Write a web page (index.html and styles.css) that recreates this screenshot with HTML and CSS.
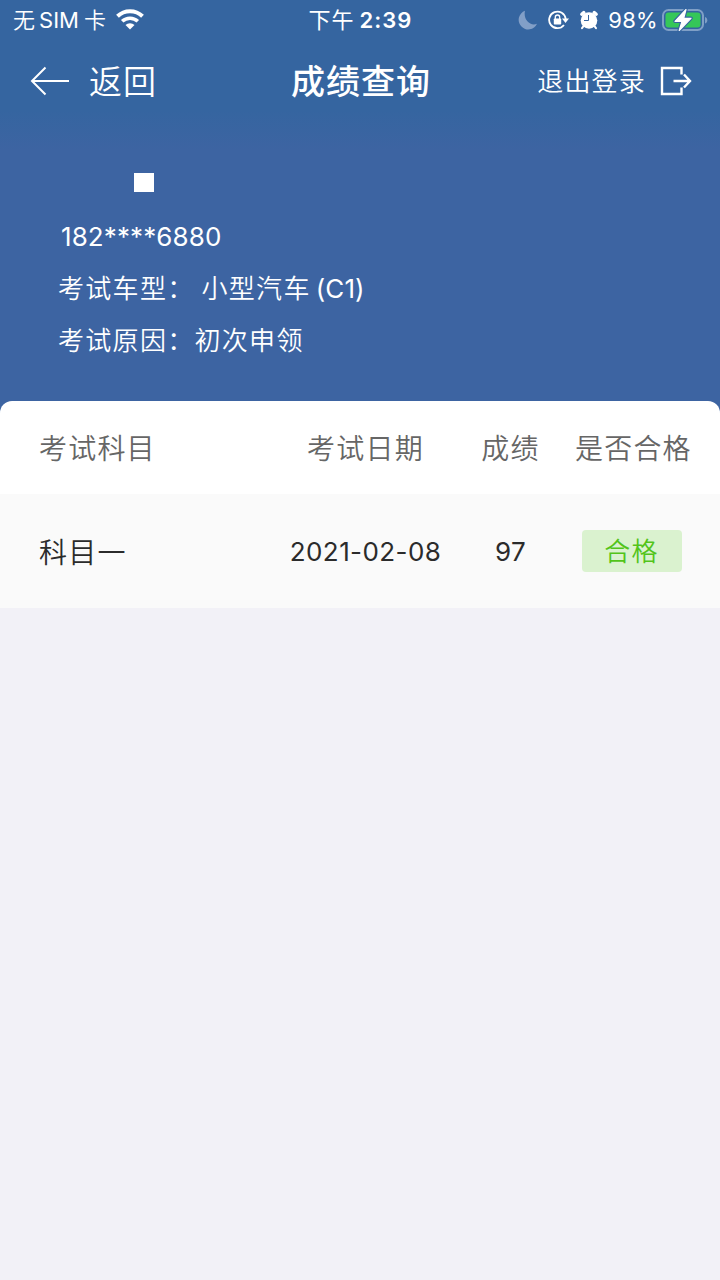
FILE: index.html
```
<!DOCTYPE html>
<html lang="zh-CN">
<head>
    <meta charset="UTF-8">
    <meta name="viewport" content="width=device-width, initial-scale=1.0">
    <title>成绩查询</title>
    <link rel="stylesheet" href="styles.css">
</head>
<body>
    <header class="header">
        <div class="status-bar">
            <div class="status-left">
                <span class="carrier">无<span class="sim">SIM</span>卡</span>
                <svg class="wifi" width="28" height="21" viewBox="0 0 28 21" fill="none">
                    <path d="M1.5 7.2a18 18 0 0 1 25 0" stroke="#fff" stroke-width="4"/>
                    <path d="M6.2 12.3a11.3 11.3 0 0 1 15.6 0" stroke="#fff" stroke-width="3.6"/>
                    <path d="M9.5 16a6.5 6.5 0 0 1 9 0L14 20.6z" fill="#fff"/>
                </svg>
            </div>
            <div class="status-time">下午<span class="clock">2:39</span></div>
            <div class="status-right">
                <svg class="moon" width="20" height="20" viewBox="0 0 20 20">
                    <path d="M7 .8A9.6 9.6 0 1 0 19 13.8C12 16.5 5 9.5 7 .8z" fill="#829fc7"/>
                </svg>
                <svg class="lock" width="21" height="20" viewBox="0 0 21 20" fill="none">
                    <path d="M17.7 9A8.3 8.3 0 1 0 16 15" stroke="#fff" stroke-width="1.8"/>
                    <path d="M14 8.4h7l-3.5 4.6z" fill="#fff"/>
                    <rect x="5.8" y="8.5" width="7.4" height="6" rx="0.8" fill="#fff"/>
                    <path d="M7.3 9V7.2a2.2 2.2 0 0 1 4.4 0V9" stroke="#fff" stroke-width="1.3"/>
                </svg>
                <svg class="alarm" width="20" height="20" viewBox="0 0 20 20" fill="none">
                    <circle cx="10" cy="10.5" r="8.3" fill="#fff"/>
                    <path d="M2.8 4.2L4.8 2.5M17.2 4.2L15.2 2.5" stroke="#fff" stroke-width="3.4" stroke-linecap="round"/>
                    <path d="M4.5 16.2L3 18.2M15.5 16.2l1.5 2" stroke="#fff" stroke-width="2" stroke-linecap="round"/>
                    <path d="M9.5 5v5.500H5" stroke="#3565a0" stroke-width="1"/>
                </svg>
                <span class="percent">98%</span>
                <svg class="battery" width="46" height="24" viewBox="0 0 46 24" fill="none">
                    <rect x="1" y="2" width="40" height="20" rx="5.5" stroke="#7f9fc6" stroke-width="2"/>
                    <rect x="3.5" y="4.5" width="35" height="15" rx="3" fill="#35c759"/>
                    <path d="M43 9v6.5c1.6-.6 2.3-1.8 2.3-3.2S44.6 9.6 43 9z" fill="#7f9fc6"/>
                    <path d="M24 1.5L13 13.3h7L17.2 22.5 29 10.3h-7.3z" stroke="#3565a0" stroke-width="3.5" stroke-linejoin="round"/>
                    <path d="M24 1.5L13 13.3h7L17.2 22.5 29 10.3h-7.3z" fill="#fff" stroke="#fff" stroke-width="1.2" stroke-linejoin="round"/>
                </svg>
            </div>
        </div>

        <nav class="navbar">
            <a class="back">
                <svg width="40" height="30" viewBox="0 0 40 30" fill="none" stroke="#fff" stroke-width="2">
                    <path d="M39 15H2M15.5 1.5L2 15l13.5 13.5"/>
                </svg>
                <span>返回</span>
            </a>
            <h1 class="title">成绩查询</h1>
            <a class="logout">
                <span>退出登录</span>
                <svg width="32" height="30" viewBox="0 0 32 30" fill="none" stroke="#fff" stroke-width="2.4">
                    <path d="M21.5 8.5V2H2v26h19.5v-6.5M13.5 15H30M24 8.5l6 6.5-6 6.5"/>
                </svg>
            </a>
        </nav>

        <div class="info">
            <div class="avatar"></div>
            <div class="info-row phone">182****6880</div>
            <div class="info-row"><span class="label">考试车型：</span><span class="car">小型汽车<span class="code">(C1)</span></span></div>
            <div class="info-row"><span class="label">考试原因：</span><span>初次申领</span></div>
        </div>
    </header>

    <main class="scores">
        <div class="row head">
            <div>考试科目</div>
            <div>考试日期</div>
            <div>成绩</div>
            <div>是否合格</div>
        </div>
        <div class="row item">
            <div>科目一</div>
            <div class="date">2021-02-08</div>
            <div class="num">97</div>
            <div><span class="tag">合格</span></div>
        </div>
    </main>
</body>
</html>
```
FILE: styles.css
```
* {
    box-sizing: border-box;
}
body {
    margin: 0;
    min-height: 100vh;
    background: #f2f1f7;
    font-family: Inter, 'Noto Sans CJK SC', sans-serif;
    font-weight: 350;
    color: #2b2b2b;
}
.header {
    height: 420px;
    color: #fff;
    background: linear-gradient(#3565a0 0, #3565a0 110px, #3d64a2 150px);
}
.status-bar {
    display: grid;
    grid-template-columns: 1fr auto 1fr;
    align-items: center;
    height: 40px;
    padding: 0 12px 0 13px;
    font-size: 22px;
    line-height: 40px;
}
.status-left,
.status-right {
    display: flex;
    align-items: center;
}
.wifi {
    margin: 0 0 2px 10px;
}
.sim {
    margin: 0 5px 0 4px;
    font-weight: 400;
}
.status-time {
    font-weight: 400;
    letter-spacing: 1px;
}
.clock {
    margin-left: 5px;
    font-weight: 600;
}
.status-right {
    justify-content: flex-end;
}
.lock {
    margin-left: 10px;
}
.alarm {
    margin: 0 0 1px 10px;
}
.percent {
    margin: 0 4px 0 9px;
    font-weight: 400;
    letter-spacing: 0.3px;
}
.battery {
    margin-bottom: 1px;
}
.navbar {
    display: grid;
    grid-template-columns: 1fr auto 1fr;
    align-items: center;
    height: 82px;
    padding: 0 28px 0 30px;
}
.navbar span,
.title {
    padding-bottom: 3px;
}
.back,
.logout {
    display: flex;
    align-items: center;
}
.back {
    gap: 19px;
    font-size: 33px;
    letter-spacing: 1px;
}
.title {
    margin: 0;
    font-size: 34px;
    font-weight: 500;
    letter-spacing: 1px;
}
.logout {
    justify-content: flex-end;
    gap: 14px;
    font-size: 26px;
    letter-spacing: 1.2px;
}
.info {
    padding: 51px 58px 0;
    font-size: 26px;
    letter-spacing: 1.3px;
}
.avatar {
    width: 20px;
    height: 19px;
    margin: 0 0 19px 76px;
    background: #fff;
}
.info-row {
    display: flex;
    height: 52px;
    line-height: 52px;
}
.phone {
    padding-left: 3px;
    font-weight: 400;
    letter-spacing: 0.1px;
}
.car {
    margin-left: 7px;
}
.code {
    margin-left: 5px;
    font-weight: 400;
    letter-spacing: 0.1px;
}
.scores {
    margin-top: -19px;
    border-radius: 12px 12px 0 0;
    overflow: hidden;
}
.row {
    display: grid;
    grid-template-columns: 246px 161px 129px 113px;
    align-items: center;
    padding-left: 39px;
    font-size: 28px;
    letter-spacing: 1.2px;
    text-align: center;
}
.row > div {
    white-space: nowrap;
}
.row > div:first-child {
    text-align: left;
}
.head {
    height: 93px;
    padding-bottom: 2px;
    color: #666;
    background: #fff;
}
.item {
    height: 114px;
    background: #fafafa;
}
.item > .date,
.item > .num {
    font-size: 26px;
    font-weight: 400;
    letter-spacing: 0.4px;
}
.tag {
    display: inline-block;
    width: 100px;
    height: 42px;
    border-radius: 4px;
    background: #daf2cf;
    color: #52c41a;
    font-size: 26px;
    line-height: 43px;
}
```
